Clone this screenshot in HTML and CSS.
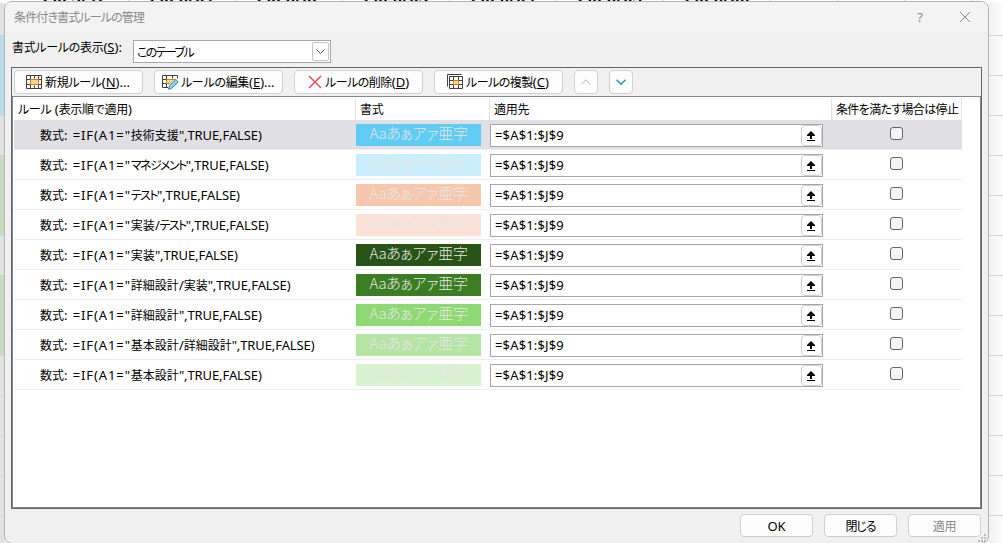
FILE: index.html
```
<!DOCTYPE html>
<html lang="ja">
<head>
  <meta charset="UTF-8" />
  <meta name="viewport" content="width=device-width, initial-scale=1.0"/>
  <title>条件付き書式ルールの管理</title>
  <link rel="stylesheet" href="styles.css">
</head>
<body>
  <!-- Worksheet behind the dialog -->
  <div class="sheet">
    <div class="sheet-months">
      <span>2025/12</span><span>2026/01</span><span>2026/02</span><span>2026/03</span><span>2026/04</span><span>2026/05</span><span>2026/06</span><i></i><i></i><i></i>
    </div>
    <div class="sheet-row first"></div>
    <div class="sheet-row blue"></div>
    <div class="sheet-row blue"></div>
    <div class="sheet-row"></div>
    <div class="sheet-row green"></div>
    <div class="sheet-row green"></div>
    <div class="sheet-row"></div>
    <div class="sheet-row green"></div>
    <div class="sheet-row green"></div>
    <div class="sheet-row"></div>
    <div class="sheet-row"></div>
    <div class="sheet-row"></div>
    <div class="sheet-row"></div>
    <div class="sheet-row"></div>
  </div>

  <div class="dialog">
    <div class="titlebar">
      <span class="title">条件付き書式ルールの管理</span>
      <span class="help">?</span>
      <svg class="close" width="12" height="12" viewBox="0 0 12 12"><path d="M1 1l10 10M11 1L1 11"/></svg>
    </div>

    <div class="scope">
      <label class="scope-label"><span class="ja">書式ルールの表示</span>(<u>S</u>):</label>
      <div class="combo">
        <span class="ja kana">このテーブル</span>
        <span class="combo-arrow"><svg width="9" height="5" viewBox="0 0 9 5"><path d="M.5.5l4 4 4-4"/></svg></span>
      </div>
    </div>

    <div class="panel">
      <div class="toolbar">
        <button class="tool new">
          <svg width="17" height="15" viewBox="0 0 17 15">
            <path class="cell" d="M4.5 4.5h8v5h-8z"/>
            <path class="grid" d="M.5.5h15v13H.5zM.5 4.5h4M.5 9.5h4M12.5 4.5h3M12.5 9.5h3M4.5.5v4M8.5.5v3M12.5.5v4M4.5 9.5v4M8.5 10.5v3M12.5 9.5v4"/>
            <path class="mark" d="M4.5 4v6M12.5 4v6M4 4.5h9M4 9.5h9"/>
          </svg>
          <span><span class="ja">新規ルール</span>(<u>N</u>)...</span>
        </button>
        <button class="tool edit">
          <svg width="17" height="15" viewBox="0 0 17 15">
            <path class="cell" d="M4.5 4.5h8v5h-8z"/>
            <path class="grid" d="M6 12.5H.5V.5h15v3M.5 4.5h4M.5 8.5h4M4.5.5v12M10.5.5v3"/>
            <path class="mark" d="M4.5 9V4.5h9M4 8.5h4"/>
            <path class="pencil" d="M6.500 14.300l1-3.500 6.300-6.300 2.300 2.300-6.300 6.300z"/>
          </svg>
          <span><span class="ja">ルールの編集</span>(<u>E</u>)...</span>
        </button>
        <button class="tool delete">
          <svg width="14" height="14" viewBox="0 0 14 14"><path class="cross" d="M1 1l12 12M13 1L1 13"/></svg>
          <span><span class="ja">ルールの削除</span>(<u>D</u>)</span>
        </button>
        <button class="tool copy">
          <svg width="17" height="16" viewBox="0 0 17 16">
            <path class="cell" d="M6.500 6.500h5v4h-5z"/>
            <path class="grid" d="M.5 12.500V.5h14M2.500 2.500h13v12h-13zM2.500 6.500h4M2.500 10.500h4M12 6.500h3M12 10.500h3M6.500 2.500v4M11.500 2.500v4M6.500 10.500v4M11.500 11v3.500"/>
            <path class="mark" d="M6.500 6v5M11.500 6v5M6 6.500h6M6 10.500h6"/>
          </svg>
          <span><span class="ja">ルールの複製</span>(<u>C</u>)</span>
        </button>
        <button class="tool arrow up"><svg width="10" height="6" viewBox="0 0 10 6"><path d="M.5 5.300L5 .8l4.500 4.500"/></svg></button>
        <button class="tool arrow down"><svg width="10" height="6" viewBox="0 0 10 6"><path d="M.5.7L5 5.200 9.500.7"/></svg></button>
      </div>

      <div class="list">
        <div class="row head">
          <div><span class="ja">ルール</span> (<span class="ja">表示順で適用</span>)</div>
          <div><span class="ja">書式</span></div>
          <div><span class="ja">適用先</span></div>
          <div><span class="ja">条件を満たす場合は停止</span></div>
        </div>
        <div class="row selected">
          <div class="rule"><span class="ja kanji">数式</span><span class="fx">: =IF(A1="</span><span class="ja kanji">技術支援</span>",TRUE,FALSE)</div>
          <div class="sample sky">Aaあぁアァ亜字</div>
          <div class="range">=$A$1:$J$9<span class="pick"><svg width="8" height="10" viewBox="0 0 8 10"><path d="M4 0L0 4v1h3v3h2V5h3V4zM0 9h8v1H0z"/></svg></span></div>
          <div class="stop"><input type="checkbox"></div>
        </div>
        <div class="row">
          <div class="rule"><span class="ja kanji">数式</span><span class="fx">: =IF(A1="</span><span class="ja kana">マネジメント</span>",TRUE,FALSE)</div>
          <div class="sample pale-sky">Aaあぁアァ亜字</div>
          <div class="range">=$A$1:$J$9<span class="pick"><svg width="8" height="10" viewBox="0 0 8 10"><path d="M4 0L0 4v1h3v3h2V5h3V4zM0 9h8v1H0z"/></svg></span></div>
          <div class="stop"><input type="checkbox"></div>
        </div>
        <div class="row">
          <div class="rule"><span class="ja kanji">数式</span><span class="fx">: =IF(A1="</span><span class="ja kana">テスト</span>",TRUE,FALSE)</div>
          <div class="sample orange">Aaあぁアァ亜字</div>
          <div class="range">=$A$1:$J$9<span class="pick"><svg width="8" height="10" viewBox="0 0 8 10"><path d="M4 0L0 4v1h3v3h2V5h3V4zM0 9h8v1H0z"/></svg></span></div>
          <div class="stop"><input type="checkbox"></div>
        </div>
        <div class="row">
          <div class="rule"><span class="ja kanji">数式</span><span class="fx">: =IF(A1="</span><span class="ja kanji">実装</span>/<span class="ja kana">テスト</span>",TRUE,FALSE)</div>
          <div class="sample pale-orange">Aaあぁアァ亜字</div>
          <div class="range">=$A$1:$J$9<span class="pick"><svg width="8" height="10" viewBox="0 0 8 10"><path d="M4 0L0 4v1h3v3h2V5h3V4zM0 9h8v1H0z"/></svg></span></div>
          <div class="stop"><input type="checkbox"></div>
        </div>
        <div class="row">
          <div class="rule"><span class="ja kanji">数式</span><span class="fx">: =IF(A1="</span><span class="ja kanji">実装</span>",TRUE,FALSE)</div>
          <div class="sample forest">Aaあぁアァ亜字</div>
          <div class="range">=$A$1:$J$9<span class="pick"><svg width="8" height="10" viewBox="0 0 8 10"><path d="M4 0L0 4v1h3v3h2V5h3V4zM0 9h8v1H0z"/></svg></span></div>
          <div class="stop"><input type="checkbox"></div>
        </div>
        <div class="row">
          <div class="rule"><span class="ja kanji">数式</span><span class="fx">: =IF(A1="</span><span class="ja kanji">詳細設計</span>/<span class="ja kanji">実装</span>",TRUE,FALSE)</div>
          <div class="sample dark-green">Aaあぁアァ亜字</div>
          <div class="range">=$A$1:$J$9<span class="pick"><svg width="8" height="10" viewBox="0 0 8 10"><path d="M4 0L0 4v1h3v3h2V5h3V4zM0 9h8v1H0z"/></svg></span></div>
          <div class="stop"><input type="checkbox"></div>
        </div>
        <div class="row">
          <div class="rule"><span class="ja kanji">数式</span><span class="fx">: =IF(A1="</span><span class="ja kanji">詳細設計</span>",TRUE,FALSE)</div>
          <div class="sample light-green">Aaあぁアァ亜字</div>
          <div class="range">=$A$1:$J$9<span class="pick"><svg width="8" height="10" viewBox="0 0 8 10"><path d="M4 0L0 4v1h3v3h2V5h3V4zM0 9h8v1H0z"/></svg></span></div>
          <div class="stop"><input type="checkbox"></div>
        </div>
        <div class="row">
          <div class="rule"><span class="ja kanji">数式</span><span class="fx">: =IF(A1="</span><span class="ja kanji">基本設計</span>/<span class="ja kanji">詳細設計</span>",TRUE,FALSE)</div>
          <div class="sample soft-green">Aaあぁアァ亜字</div>
          <div class="range">=$A$1:$J$9<span class="pick"><svg width="8" height="10" viewBox="0 0 8 10"><path d="M4 0L0 4v1h3v3h2V5h3V4zM0 9h8v1H0z"/></svg></span></div>
          <div class="stop"><input type="checkbox"></div>
        </div>
        <div class="row">
          <div class="rule"><span class="ja kanji">数式</span><span class="fx">: =IF(A1="</span><span class="ja kanji">基本設計</span>",TRUE,FALSE)</div>
          <div class="sample pale-green">Aaあぁアァ亜字</div>
          <div class="range">=$A$1:$J$9<span class="pick"><svg width="8" height="10" viewBox="0 0 8 10"><path d="M4 0L0 4v1h3v3h2V5h3V4zM0 9h8v1H0z"/></svg></span></div>
          <div class="stop"><input type="checkbox"></div>
        </div>
      </div>
    </div>

    <div class="footer">
      <button>OK</button>
      <button><span class="ja close-label">閉じる</span></button>
      <button disabled><span class="ja">適用</span></button>
    </div>
    <svg class="grip" width="9" height="8" viewBox="0 0 9 8"><path d="M6 0h2v2H6zM3 3h2v2H3zM6 3h2v2H6zM0 6h2v2H0zM3 6h2v2H3zM6 6h2v2H6z"/></svg>
  </div>
</body>
</html>
```
FILE: styles.css
```
* {
  box-sizing: border-box;
}

body {
  margin: 0;
  width: 1003px;
  height: 543px;
  overflow: hidden;
  position: relative;
  background: #fff;
  color: #000;
  font-family: "Noto Sans", "Noto Sans CJK JP", sans-serif;
  font-size: 13px;
  line-height: 20px;
}

svg {
  display: block;
  flex: none;
  fill: none;
}

.ja {
  font-family: "Noto Sans CJK JP", sans-serif;
  font-size: 12px;
  font-feature-settings: "palt";
  letter-spacing: -0.3px;
}

.kanji {
  letter-spacing: 0;
}

.kana {
  letter-spacing: -1.6px;
}

/* Worksheet */
.sheet-months {
  display: flex;
  height: 3px;
  padding-left: 22px;
  overflow: hidden;
}

.sheet-months span,
.sheet-months i {
  flex: none;
  width: 107px;
  height: 7px;
  margin-top: -3px;
  border-right: 1px solid #d0d0d0;
  text-align: center;
  font-size: 17px;
  font-weight: 600;
  line-height: 0;
}

.sheet-months i {
  width: 67px;
}

.sheet-row {
  height: 40px;
  border-bottom: 1px solid #d4d4d4;
  background: linear-gradient(90deg, #e2e2e2 5px, #fff 5px, #fff 985px, #f0f0f0 988px, #fdfdfd 1003px);
}

.sheet-row.first {
  height: 33px;
}

.sheet-row.blue {
  background: linear-gradient(90deg, #b9dbe9 5px, transparent 5px), linear-gradient(90deg, #fff 985px, #f0f0f0 988px, #fdfdfd 1003px);
}

.sheet-row.green {
  background: linear-gradient(90deg, #c6dabd 5px, transparent 5px), linear-gradient(90deg, #fff 985px, #f0f0f0 988px, #fdfdfd 1003px);
}

/* Dialog */
.dialog {
  position: absolute;
  left: 4px;
  top: 1px;
  width: 985px;
  height: 543px;
  border: 1px solid #b4b4b4;
  border-radius: 8px;
  background: #f0f0f0;
  overflow: hidden;
}

.titlebar {
  display: flex;
  align-items: center;
  height: 30px;
  padding: 0 17px 0 9px;
  background: #f3f3f3;
  color: #8a8a8a;
}

.title {
  flex: 1;
  font-family: "Noto Sans CJK JP", sans-serif;
  font-size: 12px;
  font-feature-settings: "palt";
  letter-spacing: -0.85px;
}

.help {
  margin-right: 36px;
}

.close {
  stroke: #8a8a8a;
}

.scope {
  display: flex;
  height: 35px;
  padding: 6px 0 0 7px;
}

.scope-label {
  width: 121px;
  line-height: 18px;
}

.combo {
  display: flex;
  align-items: center;
  justify-content: space-between;
  width: 198px;
  height: 23px;
  margin-top: 2px;
  padding: 0 1px 0 3px;
  border: 1px solid #a5a7ad;
  background: #fff;
}

.combo-arrow {
  display: flex;
  align-items: center;
  justify-content: center;
  width: 17px;
  height: 19px;
  border: 1px solid #c4c4c4;
  border-radius: 2px;
  stroke: #555;
}

.panel {
  width: 971px;
  height: 442px;
  margin-left: 6px;
  border: 1px solid #646469;
}

.toolbar {
  display: flex;
  gap: 11px;
  height: 28px;
  padding: 2px 0 0 2px;
}

button {
  display: flex;
  align-items: center;
  justify-content: center;
  padding: 0;
  border: 1px solid #d0d0d0;
  border-radius: 4px;
  background: #fdfdfd;
  color: #000;
  font: inherit;
}

.tool {
  flex: none;
  width: 129px;
  height: 24px;
  justify-content: flex-start;
  gap: 2px;
  white-space: nowrap;
}

.new {
  padding-left: 11px;
}

.edit {
  padding-left: 7px;
}

.delete {
  padding-left: 13px;
  gap: 3px;
}

.copy {
  padding-left: 12px;
}

.delete .ja,
.copy .ja {
  letter-spacing: -0.5px;
}

.arrow {
  width: 24px;
  justify-content: center;
}

.up {
  stroke: #b4b4b4;
}

.down {
  stroke: #2b88c8;
  stroke-width: 1.4;
}

.grid {
  stroke: #404040;
}

.cell {
  fill: #f8d48c;
}

.mark {
  stroke: #dd7a20;
}

.pencil {
  fill: #9fd0ee;
  stroke: #2383c4;
}

.cross {
  stroke: #e8434b;
  stroke-width: 1.4;
}

/* Rule list */
.list {
  height: 412px;
  border: 1px solid #828790;
  background: #fff;
}

.row {
  display: grid;
  grid-template-columns: 342px 134px 342px 130px;
  width: 948px;
  height: 30px;
  margin-left: 1px;
  border-bottom: 1px solid #ededed;
}

.head {
  height: 23px;
  border-bottom: none;
  line-height: 22px;
  padding-top: 1px;
}

.head div {
  padding-left: 4px;
  border-right: 1px solid #e2e2e2;
  white-space: nowrap;
}

.head div:last-child .ja {
  letter-spacing: -0.65px;
}

.selected {
  background: #e0dfe4;
}

.rule {
  padding-left: 26px;
  line-height: 30px;
  letter-spacing: -0.1px;
  white-space: nowrap;
}

.fx {
  letter-spacing: 0.9px;
}

.sample {
  width: 125px;
  height: 22px;
  margin-top: 4px;
  color: #e7e6e6;
  font-family: "Noto Sans CJK JP", sans-serif;
  font-size: 15px;
  font-weight: 300;
  line-height: 18px;
  letter-spacing: -0.3px;
  text-align: center;
  white-space: nowrap;
  font-feature-settings: "palt";
}

.sky { background: #60cbf3; }
.pale-sky { background: #caeefb; }
.orange { background: #f6c6ad; }
.pale-orange { background: #fbe2d6; }
.forest { background: #275317; }
.dark-green { background: #3b7d23; }
.light-green { background: #8ed973; }
.soft-green { background: #b4e5a2; }
.pale-green { background: #d9f2d0; }

.range {
  display: flex;
  justify-content: space-between;
  width: 333px;
  height: 23px;
  margin-top: 4px;
  padding-left: 4px;
  border: 1px solid #a5a7ad;
  background: #fff;
  line-height: 20px;
  letter-spacing: 0.15px;
}

.pick {
  display: flex;
  align-items: center;
  justify-content: center;
  width: 21px;
  height: 21px;
  padding-right: 1px;
  border: 1px solid #cfcfcf;
  border-radius: 4px;
}

.pick svg {
  fill: #000;
}

.stop {
  padding: 7px 0 0 58px;
}

.stop input {
  display: block;
  appearance: none;
  width: 13px;
  height: 13px;
  margin: 0;
  border: 1px solid #666;
  border-radius: 3px;
  background: #f4f4f4;
}

.footer {
  display: flex;
  justify-content: flex-end;
  gap: 11px;
  padding: 5px 7px 0 0;
}

.footer button {
  width: 73px;
  height: 23px;
}

.footer button:disabled {
  color: #888;
}

.close-label {
  letter-spacing: -1px;
}

.grip {
  position: absolute;
  right: 1px;
  bottom: 1px;
  fill: #bcbcbc;
}
```
